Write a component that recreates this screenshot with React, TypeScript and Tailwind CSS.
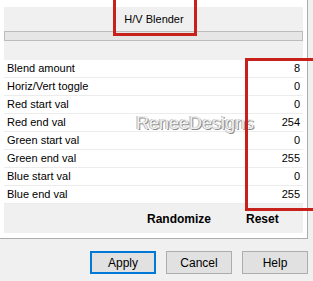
const rows: [string, number][] = [
  ['Blend amount', 8],
  ['Horiz/Vert toggle', 0],
  ['Red start val', 0],
  ['Red end val', 254],
  ['Green start val', 0],
  ['Green end val', 255],
  ['Blue start val', 0],
  ['Blue end val', 255],
];

function Button({ label, primary }: { label: string; primary?: boolean }) {
  return (
    <button
      className={
        'w-[66px] h-[23px] bg-[#e1e1e1] text-[12px] text-black flex items-center justify-center ' +
        (primary ? 'border-2 border-[#0078d7]' : 'border border-[#adadad]')
      }
    >
      {label}
    </button>
  );
}

export default function App() {
  return (
    <div
      className="relative w-[313px] h-[281px] overflow-hidden bg-[#f0f0f0] text-black"
      style={{ fontFamily: '"Liberation Sans", Arial, sans-serif' }}
    >
      {/* parameter panel */}
      <div className="w-[308px] h-[239px] bg-white border-r border-b border-[#adadad] pt-[7px] pl-[4px] pr-[4px] pb-[5px]">
        <div className="h-[226px] bg-[#f0f0f0] flex flex-col">
          <div className="h-[24px] flex items-center justify-center text-[11px] pl-[1px]">H/V Blender</div>
          <div className="h-[10px] bg-[#e6e6e6] border border-[#bcbcbc]" />
          <div className="h-[19px]" />
          {rows.map(([name, val]) => (
            <div
              key={name}
              className="h-[18px] bg-white border-b border-[#ececec] flex items-center justify-between pl-[3px] pr-[3px] text-[11px] leading-none"
            >
              <span>{name}</span>
              <span>{val}</span>
            </div>
          ))}
          <div className="flex-1 flex items-center text-[12px] font-bold pl-[143px]">
            <span className="w-[99px]">Randomize</span>
            <span>Reset</span>
          </div>
        </div>
      </div>

      {/* dialog buttons */}
      <div className="flex justify-end gap-[10px] pr-[5px] pt-[12px]">
        <Button label="Apply" primary />
        <Button label="Cancel" />
        <Button label="Help" />
      </div>

      {/* watermark */}
      <div className="absolute left-[136px] top-[110px] text-[18px] text-[#efefef] [text-shadow:1px_1px_0_#8c8c8c,-1px_0_0_#b4b4b4] pointer-events-none">
        ReneeDesigns
      </div>

      {/* highlight boxes */}
      <div className="absolute left-[113px] top-[-3px] w-[84px] h-[39px] border-[3px] border-[#c8201a]" />
      <div className="absolute left-[245px] top-[58px] w-[90px] h-[153px] border-[3px] border-[#c8201a]" />
    </div>
  );
}
